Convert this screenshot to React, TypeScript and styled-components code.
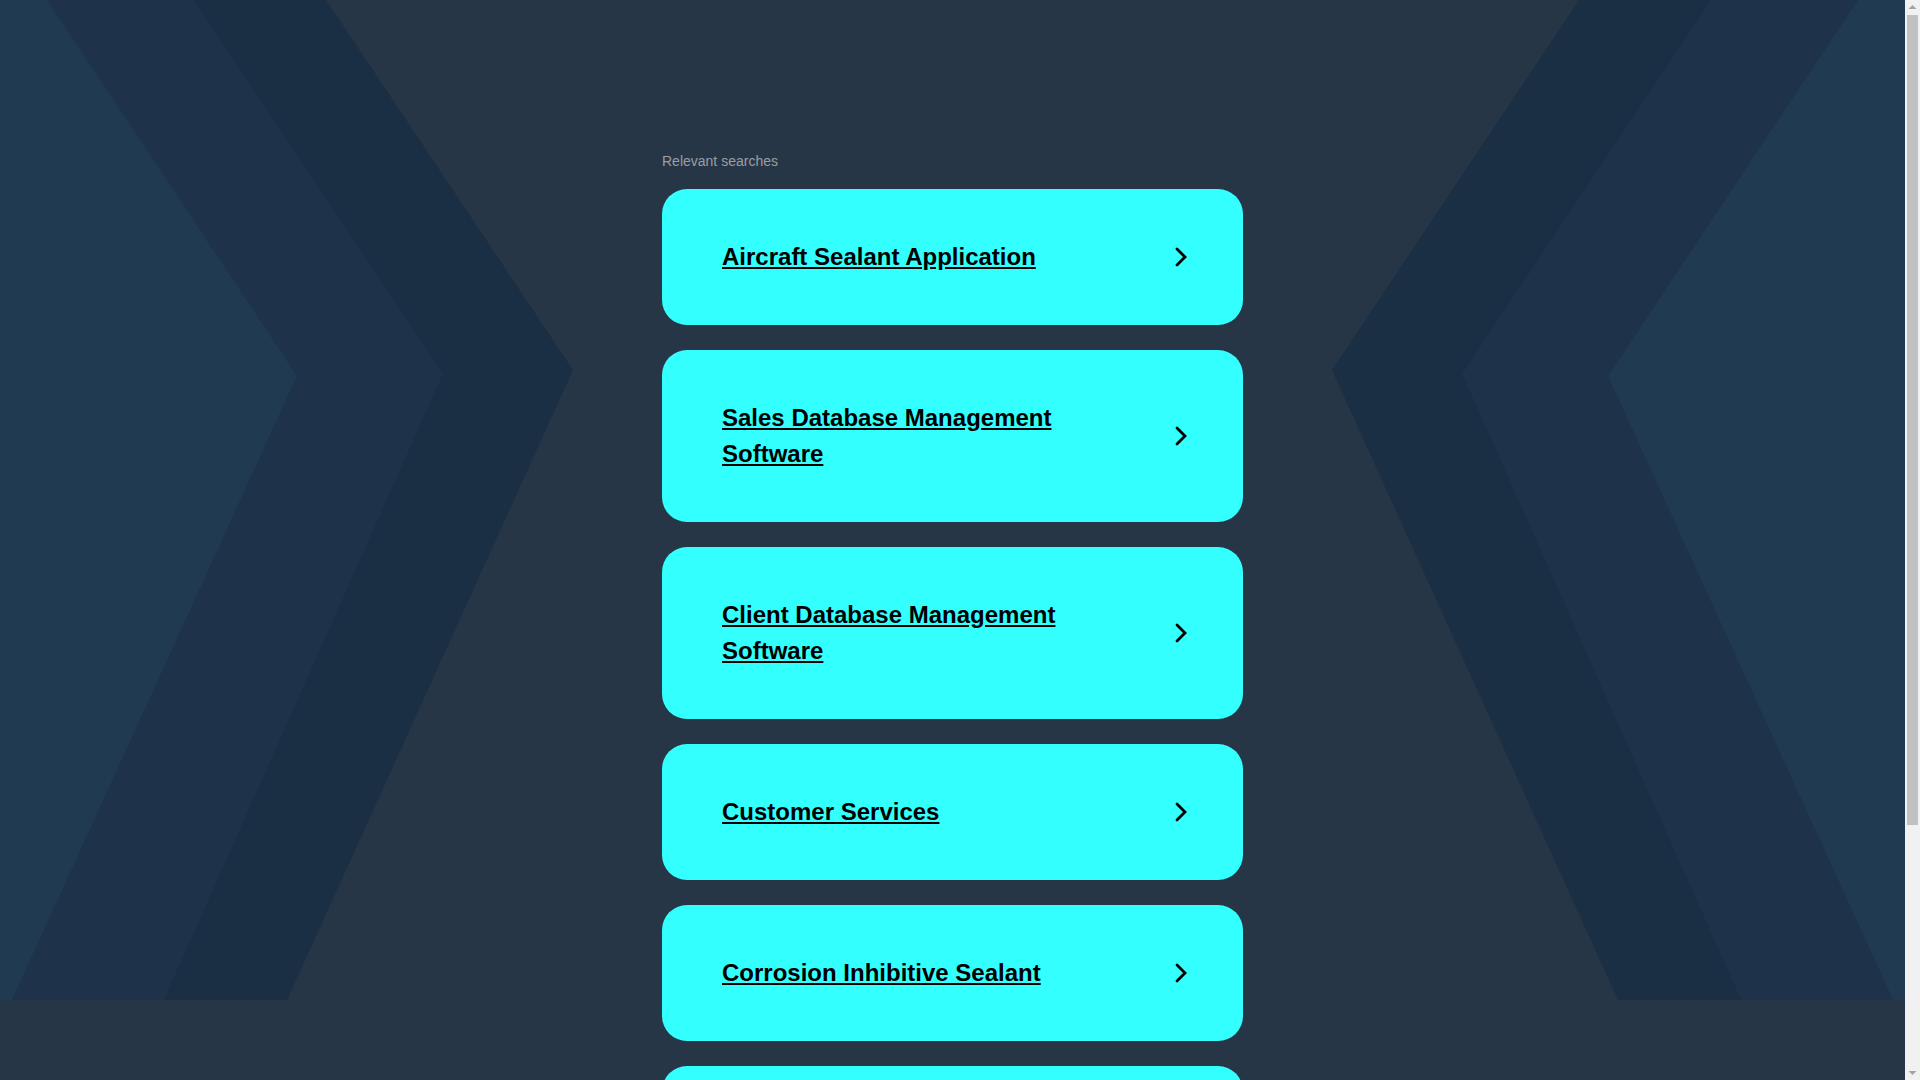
import styled, { createGlobalStyle } from 'styled-components';

const searches = [
    'Aircraft Sealant Application',
    'Sales Database Management Software',
    'Client Database Management Software',
    'Customer Services',
    'Corrosion Inhibitive Sealant',
    'Aerospace Sealants',
];

// background chevrons, mirrored round the middle of the page
const W = 1905;
const mirror = (pts: number[][]) => pts.map(([x, y]) => [W - x, y]);
const toPoints = (pts: number[][]) => pts.map((p) => p.join(',')).join(' ');

const bands = [
    { color: '#1a2e44', pts: [[0, 0], [326, 0], [573, 370], [287, 1000], [0, 1000]] },
    { color: '#1e3249', pts: [[0, 0], [194, 0], [443, 374], [164, 1000], [0, 1000]] },
    { color: '#203a51', pts: [[0, 0], [47, 0], [297, 376], [12, 1000], [0, 1000]] },
];

const svg = `<svg xmlns="http://www.w3.org/2000/svg" viewBox="0 0 ${W} 1000" preserveAspectRatio="none">${bands
    .map(
        (b) =>
            `<polygon fill="${b.color}" points="${toPoints(b.pts)}"/><polygon fill="${b.color}" points="${toPoints(mirror(b.pts))}"/>`
    )
    .join('')}</svg>`;

const bgImage = `url("data:image/svg+xml,${encodeURIComponent(svg)}")`;

const App = () => {
    return (
        <>
            <GlobalStyle />
            <Page>
                <Main $bg={bgImage}>
                    <Column>
                        <Label>Relevant searches</Label>
                        {searches.map((s) => (
                            <Card key={s} href="#">
                                <CardTitle>{s}</CardTitle>
                                <Chevron viewBox="0 0 12 20">
                                    <path d="M2 2 L10 10 L2 18" />
                                </Chevron>
                            </Card>
                        ))}
                    </Column>
                </Main>
                <ScrollTrack>
                    <ScrollArrow viewBox="0 0 15 14">
                        <path d="M3.5 9 L7.5 5 L11.5 9 Z" />
                    </ScrollArrow>
                    <ScrollThumb />
                    <TrackSpace />
                    <ScrollArrow viewBox="0 0 15 14">
                        <path d="M3.5 5 L7.5 9 L11.5 5 Z" />
                    </ScrollArrow>
                </ScrollTrack>
            </Page>
        </>
    );
};

interface BgProps {
    $bg: string;
}

const GlobalStyle = createGlobalStyle`
    html, body {
        margin: 0;
        padding: 0;
        background: #273646;
    }

    body {
        font-family: 'Liberation Sans', Arial, sans-serif;
    }
`;

const Page = styled.div`
    display: grid;
    grid-template-columns: 1fr 15px;
    align-items: start;
    min-height: 100vh;
`;

const Main = styled.main<BgProps>`
    min-height: 100vh;
    background-color: #273646;
    background-image: ${(props) => props.$bg};
    background-repeat: no-repeat;
    background-size: 100% 1000px;
    background-position: top left;
    padding: 153px 0 40px;
    box-sizing: border-box;
`;

const Column = styled.div`
    width: 581px;
    margin: 0 auto;
    display: flex;
    flex-direction: column;
    gap: 25px;
`;

const Label = styled.div`
    font-size: 14px;
    line-height: 16px;
    color: #9a9ea3;
    margin-bottom: -5px;
`;

const Card = styled.a`
    display: flex;
    align-items: center;
    background: #33ffff;
    border-radius: 25px;
    padding: 50px 56px 50px 60px;
    text-decoration: none;
    color: #000;
`;

const CardTitle = styled.span`
    flex: 1;
    font-size: 24px;
    line-height: 36px;
    font-weight: bold;
    text-decoration: underline;
    padding-right: 60px;
`;

const Chevron = styled.svg`
    width: 12px;
    height: 20px;
    flex-shrink: 0;
    fill: none;
    stroke: #000;
    stroke-width: 2.8;
    stroke-linecap: round;
    stroke-linejoin: miter;
`;

const ScrollTrack = styled.aside`
    position: sticky;
    top: 0;
    height: 100vh;
    background: #f1f1f1;
    display: flex;
    flex-direction: column;
`;

const ScrollArrow = styled.svg`
    width: 15px;
    height: 14px;
    flex-shrink: 0;
    fill: #a3a3a3;
`;

const ScrollThumb = styled.div`
    height: 810px;
    margin: 1px 2px 0;
    background: #c1c1c1;
`;

const TrackSpace = styled.div`
    flex: 1;
`;

export default App;
